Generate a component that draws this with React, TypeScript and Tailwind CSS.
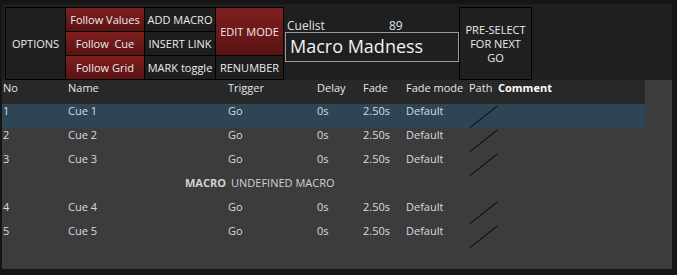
import React from "react";

const font = { fontFamily: '"Open Sans", "DejaVu Sans", sans-serif' };

function PathLine() {
  return (
    <svg width="30" height="24" className="block">
      <line x1="1" y1="23.5" x2="28.5" y2="2" stroke="#000" strokeWidth="1" />
    </svg>
  );
}

type Cue = { no: string; name: string; sel?: boolean };

const cuesA: Cue[] = [
  { no: "1", name: "Cue 1", sel: true },
  { no: "2", name: "Cue 2" },
  { no: "3", name: "Cue 3" },
];
const cuesB: Cue[] = [
  { no: "4", name: "Cue 4" },
  { no: "5", name: "Cue 5" },
];

const cols = "grid grid-cols-[66px_160px_89px_46px_43px_63px_29px_1fr]";

function CueRow({ c }: { c: Cue }) {
  return (
    <div
      className={`${cols} h-[24px] text-[11px] leading-[14px] text-[#d4dbe2] ${
        c.sel ? "bg-[#2d4554]" : ""
      }`}
    >
      <div className="pl-px">{c.no}</div>
      <div>{c.name}</div>
      <div>Go</div>
      <div>0s</div>
      <div>2.50s</div>
      <div>Default</div>
      <div>
        <PathLine />
      </div>
      <div></div>
    </div>
  );
}

export default function App() {
  const red =
    "bg-gradient-to-b from-[#7f1f1f] to-[#5b1313] text-[#ecebf0] flex items-center justify-center";
  const gray = "bg-[#1e1e1e] text-[#ecebf0] flex items-center justify-center";
  return (
    <div
      className="w-[677px] h-[275px] bg-[#151515] pt-[4px] pl-[2px] pr-[5px] overflow-hidden"
      style={font}
    >
      <div className="h-[76px] bg-[#1f1f1f] pt-[3px] pl-[3px] flex text-[11px] leading-[14px]">
        {/* OPTIONS */}
        <div className="w-[61px] h-[73px] border border-black bg-[#202020] text-[#ecebf0] flex items-center justify-center">
          OPTIONS
        </div>
        {/* Follow column */}
        <div className="-ml-px w-[80px] h-[73px] border border-black flex flex-col">
          <div className={`h-[23px] ${red}`}>Follow Values</div>
          <div className={`h-[24px] border-t border-black ${red}`}>
            Follow&nbsp;&nbsp;Cue
          </div>
          <div className={`h-[24px] border-t border-black ${red}`}>Follow Grid</div>
        </div>
        {/* gray column */}
        <div className="-ml-px w-[72px] h-[73px] border border-black flex flex-col">
          <div className={`h-[23px] ${gray}`}>ADD MACRO</div>
          <div className={`h-[24px] border-t border-black ${gray}`}>INSERT LINK</div>
          <div className={`h-[24px] border-t border-black ${gray} whitespace-nowrap`}>
            MARK toggle
          </div>
        </div>
        {/* edit column */}
        <div className="-ml-px w-[69px] h-[73px] border border-black flex flex-col">
          <div className={`h-[47px] ${red}`}>EDIT MODE</div>
          <div className={`h-[24px] border-t border-black ${gray}`}>RENUMBER</div>
        </div>
        {/* cuelist */}
        <div className="w-[175px] h-[73px] flex flex-col pl-px">
          <div className="h-[25px] relative text-[12px] text-[#dfe3ea]">
            <span className="absolute left-[2px] top-[12px] leading-[14px]">Cuelist</span>
            <span className="absolute left-[104px] top-[12px] leading-[14px]">89</span>
          </div>
          <div className="h-[30px] border border-[#9a9a9a] text-[#f2f2f2] text-[18px] leading-[22px] pl-[4px] pt-[2px] whitespace-nowrap">
            Macro Madness
          </div>
        </div>
        {/* preselect */}
        <div className="w-[73px] h-[73px] border border-black bg-[#202020] text-[#ecebf0] flex flex-col items-center justify-center text-center">
          <div className="h-[14px] leading-[14px]">PRE-SELECT</div>
          <div className="h-[14px] leading-[14px]">FOR NEXT</div>
          <div className="h-[14px] leading-[14px]">GO</div>
        </div>
      </div>
      {/* table */}
      <div className="h-[189px] bg-[#3c3c3c]">
        <div className="w-[643px]">
          <div className={`${cols} h-[24px] bg-[#282828] text-[11px] leading-[14px] text-[#e4e6ea] pt-[1px]`}>
            <div className="pl-px">No</div>
            <div>Name</div>
            <div>Trigger</div>
            <div>Delay</div>
            <div>Fade</div>
            <div>Fade mode</div>
            <div>Path</div>
            <div className="font-bold text-white">Comment</div>
          </div>
          {cuesA.map((c) => (
            <CueRow key={c.no} c={c} />
          ))}
          <div className="h-[24px] text-[11px] leading-[14px] text-[#cfd2d6] pl-[183px]">
            <span className="font-bold">MACRO</span>
            <span className="ml-[5px]">UNDEFINED MACRO</span>
          </div>
          {cuesB.map((c) => (
            <CueRow key={c.no} c={c} />
          ))}
        </div>
      </div>
    </div>
  );
}
